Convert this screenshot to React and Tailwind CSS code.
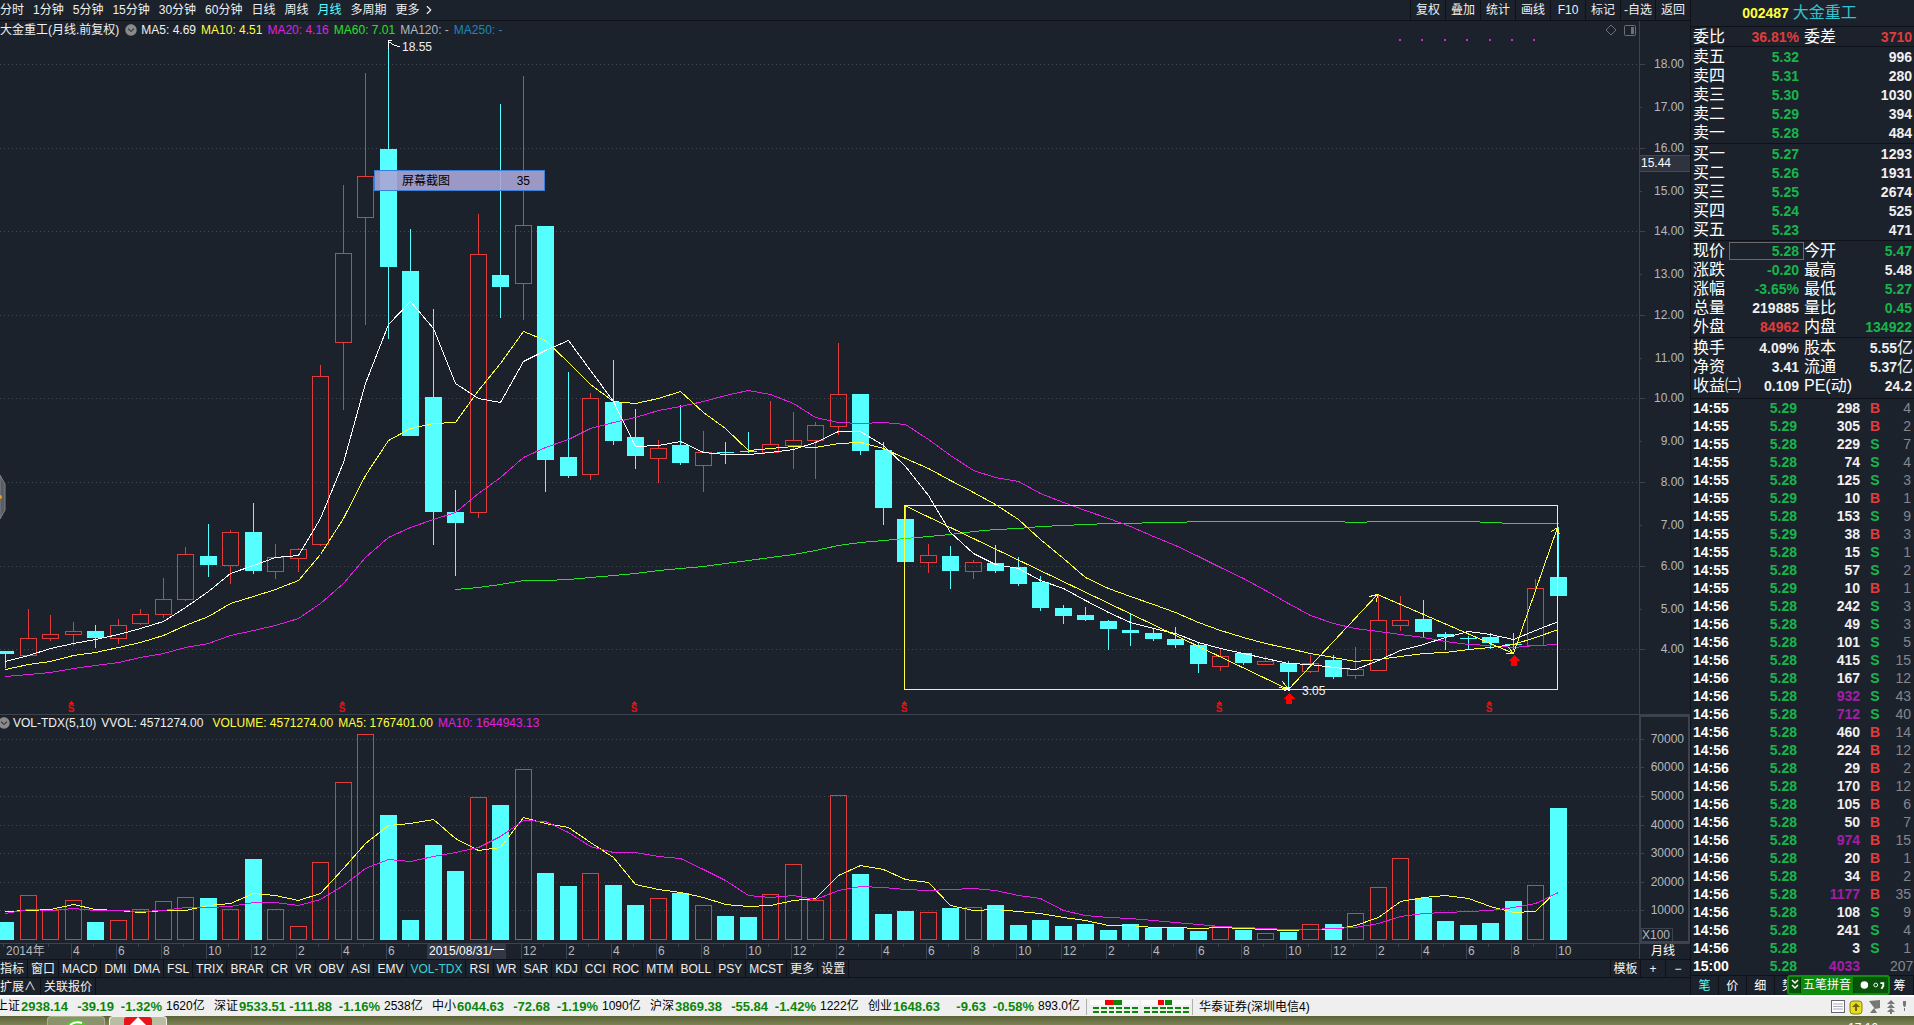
import React, { useState } from "react";
import { IoChevronDownCircle } from "react-icons/io5";
import { ChevronRight } from "lucide-react";

const periods = ["分时", "1分钟", "5分钟", "15分钟", "30分钟", "60分钟", "日线", "周线", "月线", "多周期", "更多"];
const actions = ["复权", "叠加", "统计", "画线", "F10", "标记", "-自选", "返回"];
const indicators = [
  "指标", "窗口", "MACD", "DMI", "DMA", "FSL", "TRIX", "BRAR", "CR", "VR", "OBV", "ASI", "EMV", "VOL-TDX",
  "RSI", "WR", "SAR", "KDJ", "CCI", "ROC", "MTM", "BOLL", "PSY", "MCST", "更多", "设置",
];

// kind, high, body top, body bottom, low, volume top
const candles = [
  ["d", 651, 651, 654, 668, 922], ["u", 609, 638, 656, 656, 895], ["u", 615, 634, 639, 641, 910], ["u", 622, 631, 635, 646, 900],
  ["d", 625, 631, 638, 648, 922], ["u", 619, 625, 639, 644, 920], ["u", 609, 614, 624, 625, 909], ["u", 578, 599, 615, 618, 901],
  ["u", 547, 554, 600, 601, 897], ["d", 524, 556, 565, 577, 898], ["u", 530, 532, 566, 584, 909], ["d", 503, 532, 571, 574, 859],
  ["u", 544, 557, 572, 579, 909], ["u", 548, 549, 559, 572, 926], ["u", 365, 376, 545, 546, 862], ["u", 185, 253, 343, 410, 782],
  ["u", 73, 176, 218, 325, 734], ["d", 42, 149, 267, 339, 815], ["d", 229, 271, 436, 436, 920], ["d", 309, 397, 512, 545, 845],
  ["d", 490, 512, 523, 576, 871], ["u", 214, 254, 513, 518, 797], ["d", 104, 275, 287, 318, 805], ["u", 76, 225, 284, 320, 769],
  ["d", 226, 226, 460, 492, 873], ["d", 372, 457, 476, 478, 886], ["u", 393, 398, 475, 480, 873], ["d", 360, 402, 441, 445, 885],
  ["d", 409, 437, 456, 469, 905], ["u", 440, 448, 459, 483, 898], ["d", 405, 445, 463, 465, 893], ["u", 431, 452, 466, 492, 905],
  ["d", 442, 452, 453, 464, 916], ["d", 432, 451, 452, 453, 917], ["u", 401, 444, 453, 453, 894], ["u", 412, 440, 446, 469, 864],
  ["u", 422, 425, 441, 479, 900], ["u", 343, 394, 427, 435, 795], ["d", 394, 394, 451, 455, 874], ["d", 442, 450, 508, 525, 914],
  ["d", 505, 519, 562, 562, 911], ["u", 544, 555, 563, 573, 912], ["d", 546, 556, 571, 589, 908], ["u", 560, 562, 572, 579, 907],
  ["d", 545, 563, 571, 573, 905], ["d", 557, 567, 584, 586, 925], ["d", 576, 582, 608, 611, 920], ["d", 605, 608, 616, 624, 926],
  ["d", 607, 615, 620, 621, 924], ["d", 620, 621, 629, 650, 930], ["d", 613, 630, 633, 646, 924], ["d", 629, 633, 639, 641, 928],
  ["d", 627, 639, 645, 648, 928], ["d", 643, 645, 664, 673, 931], ["u", 649, 656, 667, 671, 926], ["d", 653, 653, 663, 665, 930],
  ["u", 656, 661, 665, 665, 933], ["d", 661, 663, 672, 688, 932], ["u", 655, 663, 672, 673, 924], ["d", 655, 660, 677, 679, 924],
  ["u", 647, 669, 676, 679, 913], ["u", 595, 620, 671, 671, 887], ["u", 596, 620, 626, 631, 858], ["d", 600, 619, 632, 637, 898],
  ["d", 632, 634, 637, 650, 921], ["d", 636, 638, 639, 650, 925], ["d", 633, 637, 643, 649, 923], ["d", 633, 644, 645, 650, 901],
  ["u", 579, 588, 646, 646, 885], ["d", 527, 577, 596, 596, 808],
];

const ma5 = [661, 655, 648, 643, 639, 634, 628, 621, 607, 591, 573, 565, 557, 555, 518, 462, 383, 324, 301, 328, 383, 398, 402, 361, 350, 340, 370, 401, 446, 445, 441, 452, 454, 454, 452, 449, 442, 431, 431, 445, 466, 495, 532, 553, 564, 568, 580, 588, 600, 612, 622, 628, 633, 642, 648, 653, 658, 663, 664, 667, 669, 660, 650, 644, 637, 631, 634, 639, 630, 621];
const ma10 = [669, 664, 661, 655, 652, 647, 642, 635, 625, 616, 603, 596, 589, 580, 554, 518, 475, 440, 428, 423, 422, 390, 363, 331, 340, 362, 384, 401, 403, 398, 391, 412, 428, 450, 448, 446, 447, 443, 442, 448, 458, 468, 480, 492, 504, 519, 539, 558, 577, 588, 596, 604, 612, 622, 630, 637, 643, 648, 653, 657, 661, 659, 656, 653, 652, 649, 647, 644, 637, 629];
const ma20 = [676, 674, 672, 668, 665, 662, 657, 653, 647, 643, 635, 630, 625, 618, 603, 583, 557, 537, 527, 519, 512, 493, 477, 457, 447, 439, 428, 422, 417, 410, 406, 401, 395, 390, 394, 403, 417, 422, 423, 422, 424, 439, 455, 470, 477, 481, 493, 502, 510, 518, 526, 536, 545, 556, 567, 578, 590, 603, 615, 623, 628, 631, 634, 637, 641, 644, 645, 647, 645, 644];
const ma60 = [589, 587, 584, 580, 580, 579, 577, 575, 573, 570, 568, 566, 563, 560, 557, 554, 550, 545, 542, 540, 538, 536, 534, 531, 529, 528, 526, 525, 524, 523, 523, 522, 522, 521, 521, 521, 521, 521, 521, 521, 522, 521, 521, 521, 521, 521, 522, 523, 523, 523];
const vol5 = [911, 910, 909, 904, 909, 910, 912, 910, 910, 905, 903, 893, 895, 900, 893, 868, 843, 825, 823, 819, 838, 850, 847, 817, 823, 827, 842, 857, 884, 889, 892, 897, 904, 906, 905, 900, 898, 875, 865, 869, 879, 882, 905, 910, 909, 911, 913, 917, 920, 925, 925, 927, 927, 928, 927, 928, 929, 930, 929, 929, 925, 917, 901, 897, 895, 898, 906, 912, 911, 889];
const vol10 = [913, 909, 910, 908, 910, 910, 911, 910, 907, 907, 906, 902, 902, 905, 899, 885, 868, 859, 861, 856, 852, 847, 836, 820, 821, 832, 846, 852, 852, 856, 858, 869, 880, 895, 897, 895, 899, 890, 886, 887, 889, 890, 889, 888, 890, 895, 898, 910, 915, 917, 918, 920, 922, 924, 926, 927, 928, 929, 929, 928, 927, 923, 916, 913, 912, 911, 910, 907, 903, 892];

const priceAxis = [
  ["18.00", 64], ["17.00", 107], ["16.00", 148], ["15.00", 191], ["14.00", 231], ["13.00", 274], ["12.00", 315], ["11.00", 358],
  ["10.00", 398], ["9.00", 441], ["8.00", 482], ["7.00", 525], ["6.00", 566], ["5.00", 609], ["4.00", 649],
];
const volAxis = [["70000", 739], ["60000", 767], ["50000", 796], ["40000", 825], ["30000", 853], ["20000", 882], ["10000", 910]];

const cx = (i) => Math.round(5 + 22.5 * i);
const line = (ys, from = 0) => ys.map((y, i) => `${cx(i + from) + 0.5},${y + 0.5}`).join(" ");

const sells = [["卖五", "5.32", "996"], ["卖四", "5.31", "280"], ["卖三", "5.30", "1030"], ["卖二", "5.29", "394"], ["卖一", "5.28", "484"]];
const buys = [["买一", "5.27", "1293"], ["买二", "5.26", "1931"], ["买三", "5.25", "2674"], ["买四", "5.24", "525"], ["买五", "5.23", "471"]];
const G = "text-[#17b54b]";
const R = "text-[#e23b3b]";
const W = "text-[#f0f0f0]";
const quote = [
  ["现价", "5.28", G, "今开", "5.47", G],
  ["涨跌", "-0.20", G, "最高", "5.48", W],
  ["涨幅", "-3.65%", G, "最低", "5.27", G],
  ["总量", "219885", W, "量比", "0.45", G],
  ["外盘", "84962", R, "内盘", "134922", G],
];
const finance = [
  ["换手", "4.09%", W, "股本", "5.55", W, "亿"],
  ["净资", "3.41", W, "流通", "5.37", W, "亿"],
  ["收益㈡", "0.109", W, "PE(动)", "24.2", W],
];
const trades = [
  ["14:55", "5.29", 298, "B", 4], ["14:55", "5.29", 305, "B", 2], ["14:55", "5.28", 229, "S", 7], ["14:55", "5.28", 74, "S", 4],
  ["14:55", "5.28", 125, "S", 3], ["14:55", "5.29", 10, "B", 1], ["14:55", "5.28", 153, "S", 9], ["14:55", "5.29", 38, "B", 3],
  ["14:55", "5.28", 15, "S", 1], ["14:55", "5.28", 57, "S", 2], ["14:55", "5.29", 10, "B", 1], ["14:56", "5.28", 242, "S", 3],
  ["14:56", "5.28", 49, "S", 3], ["14:56", "5.28", 101, "S", 5], ["14:56", "5.28", 415, "S", 15], ["14:56", "5.28", 167, "S", 12],
  ["14:56", "5.28", 932, "S", 43], ["14:56", "5.28", 712, "S", 40], ["14:56", "5.28", 460, "B", 14], ["14:56", "5.28", 224, "B", 12],
  ["14:56", "5.28", 29, "B", 2], ["14:56", "5.28", 170, "B", 12], ["14:56", "5.28", 105, "B", 6], ["14:56", "5.28", 50, "B", 7],
  ["14:56", "5.28", 974, "B", 15], ["14:56", "5.28", 20, "B", 1], ["14:56", "5.28", 34, "B", 2], ["14:56", "5.28", 1177, "B", 35],
  ["14:56", "5.28", 108, "S", 9], ["14:56", "5.28", 241, "S", 4], ["14:56", "5.28", 3, "S", 1], ["15:00", "5.28", 4033, "", 207],
];
const indexes = [
  ["上证", "2938.14", "-39.19", "-1.32%", "1620亿"],
  ["深证", "9533.51", "-111.88", "-1.16%", "2538亿"],
  ["中小", "6044.63", "-72.68", "-1.19%", "1090亿"],
  ["沪深", "3869.38", "-55.84", "-1.42%", "1222亿"],
  ["创业", "1648.63", "-9.63", "-0.58%", "893.0亿"],
];

const PriceChart = () => (
  <svg className="w-full flex-[676] min-h-0" viewBox="0 38 1690 676" preserveAspectRatio="none" shapeRendering="crispEdges" fontSize="12">
    {priceAxis.map(([label, y], i) => (
      <g key={label}>
        {i % 2 === 0 && <line x1="0" x2="1639" y1={y + 0.5} y2={y + 0.5} stroke="#434a54" strokeDasharray="1 3" />}
        <line x1="1639" x2={i % 2 ? 1642 : 1645} y1={y + 0.5} y2={y + 0.5} stroke="#3c434e" />
        <text x="1684" y={y + 4} textAnchor="end" fill="#b4b8be">{label}</text>
      </g>
    ))}
    <line x1="1639.5" x2="1639.5" y1="38" y2="714" stroke="#3c434e" />
    <rect x="1640" y="155" width="50" height="17" fill="#2f323f" />
    <path d="M1640 155.5H1690M1640 171.5H1690" stroke="#444957" />
    <text x="1641" y="167" fill="#fff">15.44</text>
    {[0, 1, 2, 3, 4, 5, 6].map((n) => (
      <rect key={n} x={Math.round(1399 + n * 22.4)} y="39" width="2" height="2" fill="#e01fe0" />
    ))}

    {candles.map(([kind, high, top, bottom, low], i) =>
      kind === "d" ? (
        <g key={i} fill="#55ffff">
          <rect x={cx(i)} y={high} width="1" height={low - high} />
          <rect x={cx(i) - 8} y={top} width="17" height={bottom - top} />
        </g>
      ) : (
        <g key={i} fill="none" stroke="#e23b3b">
          <path d={`M${cx(i) + 0.5} ${high}V${top}M${cx(i) + 0.5} ${bottom}V${low}`} />
          <rect x={cx(i) - 7.5} y={top + 0.5} width="16" height={bottom - top - 1} />
        </g>
      )
    )}

    <g fill="none">
      <polyline points={line(ma60, 20)} stroke="#28e028" />
      <polyline points={line(ma20)} stroke="#e01fe0" />
      <polyline points={line(ma10)} stroke="#ffff3c" />
      <polyline points={line(ma5)} stroke="#fff" />
    </g>

    {/* hand drawn box and trend arrows */}
    <g fill="none" stroke="#ffff3c">
      <rect x="904.5" y="505.5" width="653" height="184" />
      <path d="M904.5 505.5L1288.5 689.5M1282.5 681.5L1288.5 689.5L1279.5 687.5" />
      <path d="M1288.5 689.5L1377.5 594.5M1369.5 596.5L1377.5 594.5L1376.5 602.5" />
      <path d="M1377.5 594.5L1513.5 653.5M1508.5 647.5L1513.5 653.5L1505.5 653.5" />
      <path d="M1513.5 653.5L1557.5 527.5M1551.5 531.5L1557.5 527.5L1559.5 534.5" />
    </g>
    <g fill="#f00">
      <path d="M1289 693l6 6h-3v5h-6v-5h-3z" />
      <path d="M1514 655l6 6h-3v5h-6v-5h-3z" />
    </g>
    <path d="M1284 687l6 4M1290 687l-6 4" stroke="#fff" />
    <text x="1302" y="695" fill="#f0f0f0">3.05</text>
    <path d="M388.5 49V40.5H392M389 42l5 3l6 2" stroke="#fff" fill="none" />
    <text x="402" y="51" fill="#f0f0f0">18.55</text>

    {[71, 342, 634, 904, 1219, 1489].map((x) => (
      <g key={x} fill="#e81010">
        <path d={`M${x} 701l3 3h-6z`} />
        <text x={x} y="712" textAnchor="middle" fontSize="10" fontWeight="bold">S</text>
      </g>
    ))}
  </svg>
);

const VolumeChart = () => (
  <svg className="w-full flex-[226] min-h-0" viewBox="0 733 1690 226" preserveAspectRatio="none" shapeRendering="crispEdges" fontSize="12">
    {volAxis.map(([label, y]) => (
      <g key={label}>
        <line x1="0" x2="1639" y1={y + 0.5} y2={y + 0.5} stroke="#434a54" strokeDasharray="1 3" />
        <line x1="1639" x2="1644" y1={y + 0.5} y2={y + 0.5} stroke="#3c434e" />
        <text x="1684" y={y + 4} textAnchor="end" fill="#b4b8be">{label}</text>
      </g>
    ))}
    <path d="M1640 733V942H1689V733" fill="none" stroke="#3c434e" strokeWidth="2" />
    <rect x="1641.5" y="928.5" width="31" height="13" fill="#1c222c" stroke="#3c434e" />
    <text x="1642" y="939" fill="#b4b8be">X100</text>

    {candles.map(([kind, , , , , v], i) =>
      kind === "d" ? (
        <rect key={i} x={cx(i) - 8} y={v} width="17" height={940 - v} fill="#55ffff" />
      ) : (
        <rect key={i} x={cx(i) - 7.5} y={v + 0.5} width="16" height={939 - v} fill="none" stroke="#e23b3b" />
      )
    )}
    <polyline points={line(vol5)} fill="none" stroke="#ffff3c" />
    <polyline points={line(vol10)} fill="none" stroke="#e01fe0" />

    <line x1="0" x2="1690" y1="943.5" y2="943.5" stroke="#3c434e" />
    {candles.map((c, i) => {
      const major = i % 2 === 1 && i > 1;
      return <line key={i} x1={cx(i) - 1.5} x2={cx(i) - 1.5} y1="944" y2={major ? 959 : 947} stroke="#3c434e" />;
    })}
    <text x="6" y="955" fill="#b4b8be">2014年</text>
    {candles.map((c, i) =>
      i > 1 && i % 2 === 1 && (i < 19 || i > 21) ? (
        <text key={i} x={cx(i)} y="955" fill="#b4b8be">{((i + 1) % 12) || 12}</text>
      ) : null
    )}
    <rect x="427" y="944" width="79" height="15" fill="#333745" />
    <text x="429" y="955" fill="#fff">2015/08/31/一</text>
    <line x1="1639.5" x2="1639.5" y1="943" y2="959" stroke="#3c434e" />
    <text x="1663" y="955" textAnchor="middle" fill="#fff">月线</text>
  </svg>
);

const QuoteRow = ({ row, boxed }) => {
  const [a, av, ac, b, bv, bc, unit] = row;
  return (
    <div className="flex h-[19px] items-center">
      <span className="w-9 whitespace-nowrap">{a}</span>
      <span className={`flex-1 h-[18px] leading-4 pr-1 text-right text-sm font-bold border ${ac} ${boxed ? "border-[#666a70]" : "border-transparent"}`}>
        {av}
      </span>
      <span className="w-[44px] whitespace-nowrap">{b}</span>
      <span className={`w-[64px] flex items-center justify-end text-sm font-bold leading-4 ${bc}`}>
        {bv}
        {unit && <span className="text-base font-normal leading-4 -mr-px">{unit}</span>}
      </span>
    </div>
  );
};

const DepthRow = ({ row }) => (
  <div className="flex h-[19px] items-center">
    <span className="w-9">{row[0]}</span>
    <span className="flex-1 pr-[5px] text-right text-sm font-bold text-[#17b54b]">{row[1]}</span>
    <span className="w-[108px] text-right text-sm font-bold text-[#f0f0f0]">{row[2]}</span>
  </div>
);

const SidePanel = () => (
  <aside className="w-[224px] shrink-0 flex flex-col border-l border-[#0e1218] text-base text-white">
    <h1 className="flex h-[27px] items-center justify-center gap-1 border-b border-[#0e1218] pr-[6px]">
      <span className="text-sm font-bold text-[#ffff3c]">002487</span>
      <span className="text-[#35c3d0]">大金重工</span>
    </h1>
    <div className="flex h-5 items-center border-b border-[#0e1218] px-[2px]">
      <span className="w-9">委比</span>
      <span className="flex-1 pr-[5px] text-right text-sm font-bold text-[#e23b3b]">36.81%</span>
      <span className="w-[44px]">委差</span>
      <span className="w-[64px] text-right text-sm font-bold text-[#e23b3b]">3710</span>
    </div>
    <div className="h-[97px] border-b border-[#0e1218] px-[2px]">
      {sells.map((r) => <DepthRow key={r[0]} row={r} />)}
    </div>
    <div className="h-[97px] border-b border-[#0e1218] px-[2px]">
      {buys.map((r) => <DepthRow key={r[0]} row={r} />)}
    </div>
    <div className="h-[97px] border-b border-[#0e1218] px-[2px]">
      {quote.map((r, i) => <QuoteRow key={r[0]} row={r} boxed={i === 0} />)}
    </div>
    <div className="h-[61px] border-b border-[#0e1218] px-[2px]">
      {finance.map((r) => <QuoteRow key={r[0]} row={r} />)}
    </div>
    <table className="w-full table-fixed text-sm font-bold">
      <tbody>
        {trades.map(([time, price, vol, side, count], i) => (
          <tr key={i} className="h-[18px] leading-[18px]">
            <td className="w-[52px] p-0 pl-[2px]">{time}</td>
            <td className="w-[54px] p-0 text-right text-[#17b54b]">{price}</td>
            <td className={`w-[63px] p-0 text-right ${vol > 500 ? "text-[#a31ea8]" : "text-[#f0f0f0]"}`}>{vol}</td>
            <td className={`w-[30px] p-0 text-center ${side === "B" ? "text-[#e23b3b]" : "text-[#17b54b]"}`}>{side}</td>
            <td className="p-0 pr-[3px] text-right font-normal text-[#84878c]">{count}</td>
          </tr>
        ))}
      </tbody>
    </table>
    <div className="relative flex-1 flex border-t border-[#0e1218] text-xs">
      {["笔", "价", "细", "势", "", "", "", "筹"].map((t, i) => (
        <button key={i} className={`flex-1 border-r border-[#0e1218] ${i === 0 ? "text-[#55ffff]" : ""}`}>
          {t}
        </button>
      ))}
      <div className="absolute left-[96px] -top-px flex h-5 w-[103px] items-center rounded-[3px] border-2 border-[#0c8f0c] bg-[#0a520a]">
        <svg className="h-3 w-[11px]" viewBox="0 0 11 12" fill="none" stroke="#fff" strokeWidth="1.5">
          <path d="M3 1l3 3l3-3M3 6l3 3l3-3" />
        </svg>
        <span className="h-full border-x border-[#063806] bg-[#0e8a0e] px-[2px] leading-4">五笔拼音</span>
        <svg className="h-3 flex-1" viewBox="0 0 36 12">
          <circle cx="11" cy="6" r="4" fill="#fff" />
          <circle cx="23" cy="6" r="2" fill="none" stroke="#fff" />
          <path d="M28 4h3v3l-2 3" fill="none" stroke="#fff" strokeWidth="2" />
        </svg>
      </div>
    </div>
  </aside>
);

const MarketMeter = () => (
  <svg className="h-4 w-[107px] border-x border-[#b0b0b0]" viewBox="0 0 107 16" shapeRendering="crispEdges">
    {[0, 52].map((x) => (
      <g key={x}>
        <rect x={x + 3} y="1" width="50" height="5" fill="#fafafa" />
        {[0, 1, 2, 3, 4, 5].map((n) => (
          <g key={n} fill="#0b860b">
            <rect x={x + 6 + n * 8} y="8" width="6" height="2" />
            <rect x={x + 6 + n * 8} y="12" width="6" height="2" />
          </g>
        ))}
      </g>
    ))}
    <rect x="18" y="1" width="8" height="5" fill="#f00000" />
    <rect x="27" y="1" width="9" height="5" fill="#0b860b" />
    <rect x="72" y="1" width="6" height="5" fill="#f00000" />
    <rect x="79" y="1" width="8" height="5" fill="#0b860b" />
  </svg>
);

const StatusBar = () => (
  <footer className="flex h-[21px] shrink-0 items-center overflow-hidden border-t-2 border-white bg-[#efefef] text-xs text-black">
    <div className="-ml-1 flex whitespace-nowrap">
      {indexes.map(([name, value, diff, pct, amount]) => (
        <div key={name} className="flex w-[218px] items-center">
          <span className="w-6">{name}</span>
          <span className="w-12 text-right text-[13px] font-bold text-[#0b860b]">{value}</span>
          <span className="w-[46px] text-right text-[13px] font-bold text-[#0b860b]">{diff}</span>
          <span className="w-12 text-right text-[13px] font-bold text-[#0b860b]">{pct}</span>
          <span className="pl-1">{amount}</span>
        </div>
      ))}
    </div>
    <MarketMeter />
    <span className="flex-1 pl-[6px]">华泰证券(深圳电信4)</span>
    <svg className="mr-1 h-4 w-[80px]" viewBox="0 0 80 16">
      <rect x="1.5" y="1.5" width="13" height="12" fill="#fff" stroke="#667" />
      <path d="M3 5h10M3 7.5h10M3 10h10" stroke="#aab" />
      <rect x="20" y="2" width="12" height="13" rx="3" fill="#e8dc20" stroke="#8a8010" />
      <path d="M26 4l4 4h-3v4h-2v-4h-3z" fill="#6a6408" />
      <path d="M39 2l11-1v8l-5 1zM44 9l-4 5h7z" fill="#777" />
      <path d="M61 1l4 4h-8zM61 5l4 4h-8zM61 9l4 4h-8zM60 12h2v3h-2z" fill="#777" />
      <path d="M73 2h3v4l-1 2h-1l-1-2zM74 9h1v3h-1z" fill="#777" />
    </svg>
  </footer>
);

const App = () => {
  const [period, setPeriod] = useState("月线");
  const [indicator, setIndicator] = useState("VOL-TDX");

  return (
    <div className='relative flex h-screen flex-col overflow-hidden bg-[#1c222c] font-["Liberation_Sans","Noto_Sans_CJK_SC",sans-serif] text-xs text-[#f0f0f0]'>
      <div className="flex min-h-0 flex-1">
        <main className="relative flex min-w-0 flex-1 flex-col">
          <nav className="flex h-[21px] shrink-0 items-center border-b border-[#0e1218]">
            <div className="flex items-center gap-[9px] whitespace-nowrap">
              {periods.map((p) => (
                <button key={p} onClick={() => setPeriod(p)} className={p === period ? "text-[#55ffff]" : ""}>
                  {p}
                </button>
              ))}
              <ChevronRight className="-ml-[7px] h-[14px] w-[14px]" strokeWidth={2} />
            </div>
            <div className="ml-auto flex h-full">
              {actions.map((a) => (
                <button key={a} className="w-[35px] border-l border-[#0e1218]">{a}</button>
              ))}
            </div>
          </nav>

          <div className="flex h-[17px] shrink-0">
            <div className="flex flex-1 items-center gap-[5px] whitespace-nowrap">
              <span>大金重工(月线.前复权)</span>
              <IoChevronDownCircle className="h-[14px] w-[14px] text-[#8a8a8a] -mr-[2px]" />
              <span>MA5: 4.69</span>
              <span className="text-[#ffff3c]">MA10: 4.51</span>
              <span className="text-[#e01fe0]">MA20: 4.16</span>
              <span className="text-[#28e028]">MA60: 7.01</span>
              <span className="text-[#b4b8be]">MA120: -</span>
              <span className="text-[#1c86b8]">MA250: -</span>
            </div>
            <svg className="mr-[3px] h-full w-[32px]" viewBox="0 0 32 17" fill="none" stroke="#6b7078">
              <path d="M7 4l5 5l-5 5l-5-5z" />
              <rect x="20.5" y="4.5" width="11" height="10" rx="1" />
              <rect x="27" y="6" width="3" height="7" fill="#6b7078" stroke="none" />
            </svg>
            <div className="w-[51px] border-l border-[#3c434e]" />
          </div>
          <PriceChart />

          <div className="flex h-[19px] shrink-0 border-t border-[#3c434e]">
            <div className="flex flex-1 items-center whitespace-nowrap pb-[2px]">
              <IoChevronDownCircle className="-ml-[3px] h-[14px] w-[14px] text-[#8a8a8a]" />
              <span className="ml-[2px]">VOL-TDX(5,10)</span>
              <span className="ml-[5px]">VVOL: 4571274.00</span>
              <span className="ml-[9px] text-[#ffff3c]">VOLUME: 4571274.00</span>
              <span className="ml-[5px] text-[#ffff3c]">MA5: 1767401.00</span>
              <span className="ml-[5px] text-[#e01fe0]">MA10: 1644943.13</span>
            </div>
            <div className="w-[51px] border-x-2 border-t-2 border-[#3c434e]" />
          </div>
          <VolumeChart />

          <nav className="flex h-[18px] shrink-0 items-stretch whitespace-nowrap border-t border-[#0e1218] leading-4">
            {indicators.map((n) => (
              <button
                key={n}
                onClick={() => setIndicator(n)}
                className={`border-r border-[#0e1218] px-[3px] first:pl-0 ${n === indicator ? "text-[#35d5d5]" : ""}`}
              >
                {n}
              </button>
            ))}
            <div className="ml-auto flex">
              <button className="w-[30px] border-l border-[#0e1218]">模板</button>
              <button className="w-[25px] border-l border-[#0e1218]">+</button>
              <button className="w-[25px] border-l border-[#0e1218]">−</button>
            </div>
          </nav>
          <nav className="flex h-[18px] shrink-0 border-t border-[#0e1218]">
            <button className="border-r border-[#0e1218] pr-1">扩展∧</button>
            <button className="border-r border-[#0e1218] px-[3px]">关联报价</button>
          </nav>

          {/* collapsed drawer handle */}
          <svg className="absolute left-0 top-[475px] h-[44px] w-[6px]" viewBox="0 0 6 44">
            <path d="M0 0l5 9v26l-5 9z" fill="#5a5e64" stroke="#7c8086" />
            <circle cx="0" cy="22" r="2" fill="#e0a020" />
          </svg>
          <div className="absolute left-[374px] top-[170px] flex h-[21px] w-[171px] items-center justify-between border border-[#3c7fd6] bg-[#aaa5d7]/90 pl-[27px] pr-[14px] text-black">
            <span>屏幕截图</span>
            <span>35</span>
          </div>
        </main>
        <SidePanel />
      </div>
      <StatusBar />
      <div className="relative flex h-[9px] shrink-0 overflow-hidden bg-linear-to-b from-[#5c6238] to-[#7c8354]">
        <div className="ml-[47px] w-[58px] rounded-t-sm border border-b-0 border-[#a9b08c] bg-[#8b936a]">
          <svg className="mx-auto h-2 w-6" viewBox="0 0 24 8">
            <path d="M2 8q5-6 12-5q6 1 8 5z" fill="#58c832" />
            <path d="M6 8q5-4 12-2" fill="none" stroke="#fff" strokeWidth="2" />
          </svg>
        </div>
        <div className="ml-1 w-[58px] rounded-t-sm border border-b-0 border-[#f4f4ec] bg-[#b9bea2]">
          <svg className="mx-auto h-2 w-7" viewBox="0 0 28 8">
            <path d="M0 8V3q0-3 3-3h22q3 0 3 3v5z" fill="#e8141c" />
            <path d="M14 0l8 8h-16z" fill="#fff" />
          </svg>
        </div>
        <span className="ml-auto mr-9 mt-[6px] leading-3 text-white">17:16</span>
      </div>
    </div>
  );
};

export default App;
